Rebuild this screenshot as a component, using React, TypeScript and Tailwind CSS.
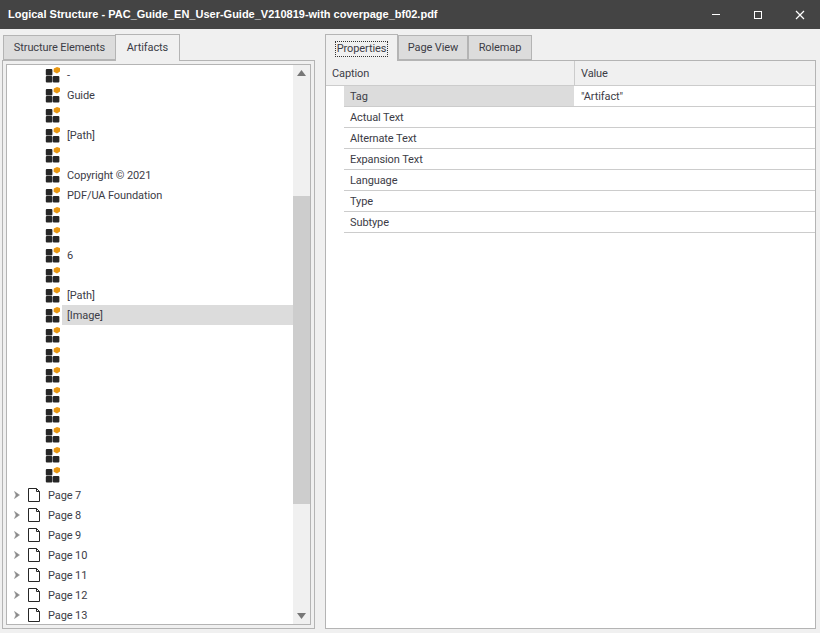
import React from 'react';

const artifactLabels = [
  '-', 'Guide', '', '[Path]', '', 'Copyright © 2021', 'PDF/UA Foundation', '', '', '6', '', '[Path]', '[Image]',
  '', '', '', '', '', '', '', '',
];
const pages = ['Page 7', 'Page 8', 'Page 9', 'Page 10', 'Page 11', 'Page 12', 'Page 13'];
const properties = ['Actual Text', 'Alternate Text', 'Expansion Text', 'Language', 'Type', 'Subtype'];

function ArtifactIcon() {
  return (
    <svg width="16" height="16" viewBox="0 0 16 16" className="shrink-0">
      <rect x="0.8" y="2" width="6.6" height="6.6" rx="1" fill="#262626" />
      <rect x="0.8" y="9" width="6.6" height="6.6" rx="1" fill="#262626" />
      <rect x="7.8" y="9" width="6.6" height="6.6" rx="1" fill="#262626" />
      <path d="M12 0 L15 1 L15 4.4 L12 6.6 L8.6 4.8 L8.8 1.6 Z" fill="#e8960f" />
    </svg>
  );
}

function PageIcon() {
  return (
    <svg width="14" height="16" viewBox="0 0 14 16" className="shrink-0">
      <path d="M0.5 1.5 H8.5 L11.5 4.5 V14.5 H0.5 Z" fill="#fff" stroke="#262626" strokeWidth="1" />
      <path d="M8.5 1.5 V4.5 H11.5" fill="none" stroke="#262626" strokeWidth="1" />
    </svg>
  );
}

function Chevron() {
  return (
    <svg width="6" height="8" viewBox="0 0 6 8" className="shrink-0">
      <path d="M0.5 0.5 L5.5 4 L0.5 7.5 L2 4 Z" fill="#8a8a8a" stroke="#8a8a8a" strokeWidth="0.5" />
    </svg>
  );
}

function Tab({ label, active, focused, className }: { label: string; active?: boolean; focused?: boolean; className: string }) {
  return (
    <div
      className={`flex items-center justify-center pt-px border border-[#b4b4b4] ${
        active ? 'bg-[#f0f0f0] border-b-0 h-[27px] z-10 -mb-px' : 'bg-[#dcdcdc] h-[25px]'
      } ${className}`}
    >
      <span className={focused ? 'outline-1 outline-dotted outline-[#333] px-px leading-[14px]' : ''}>{label}</span>
    </div>
  );
}

export default function App() {
  return (
    <div className="w-[820px] h-[633px] overflow-hidden bg-[#f0f0f0] text-[#3c3c46] text-[11px] tracking-[-0.1px] font-['Roboto',sans-serif] flex flex-col">
      {/* Title bar */}
      <div className="h-[29px] shrink-0 bg-[#444444] flex items-center text-white">
        <div className="flex-1 pl-2 font-bold text-[11px] tracking-normal font-['Liberation_Sans',sans-serif]">
          Logical Structure - PAC_Guide_EN_User-Guide_V210819-with coverpage_bf02.pdf
        </div>
        <div className="flex items-center w-[125px] h-full">
          <div className="w-[42px] flex justify-center">
            <div className="w-2 h-px bg-white" />
          </div>
          <div className="w-[42px] flex justify-center">
            <div className="w-2 h-2 border border-white" />
          </div>
          <div className="w-[41px] flex justify-center">
            <svg width="10" height="10" viewBox="0 0 10 10">
              <path d="M1 1 L9 9 M9 1 L1 9" stroke="#fff" strokeWidth="1.2" />
            </svg>
          </div>
        </div>
      </div>

      <div className="flex pt-[5px] pl-[2px]">
        {/* Left panel */}
        <div className="w-[313px] flex flex-col">
          <div className="flex items-end h-[26px] pl-px">
            <Tab label="Structure Elements" className="w-[113px]" />
            <Tab label="Artifacts" active className="w-[65px] -ml-px" />
          </div>
          <div className="h-[569px] border border-[#b4b4b4] p-[3px]">
            <div className="h-[561px] border border-[#b4b4b4] bg-white flex">
              <div className="flex-1 min-w-0">
                {artifactLabels.map((label, i) => (
                  <div key={i} className="h-5 flex items-center pl-[38px]">
                    <ArtifactIcon />
                    <div className={`ml-[1px] h-5 flex-1 flex items-center pt-[2px] pl-[5px] ${label === '[Image]' ? 'bg-[#dcdcdc]' : ''}`}>
                      {label}
                    </div>
                  </div>
                ))}
                {pages.map((page) => (
                  <div key={page} className="h-5 flex items-center pl-[7px]">
                    <Chevron />
                    <div className="w-[8px]" />
                    <PageIcon />
                    <span className="ml-[6px] pt-[2px]">{page}</span>
                  </div>
                ))}
              </div>
              {/* Scrollbar */}
              <div className="w-[17px] shrink-0 bg-[#f0f0f0] flex flex-col items-center">
                <svg width="9" height="6" viewBox="0 0 9 6" className="mt-[5px]">
                  <path d="M4.5 0 L9 6 H0 Z" fill="#777777" />
                </svg>
                <div className="w-full h-[308px] mt-[120px] bg-[#cdcdcd]" />
                <div className="flex-1" />
                <svg width="9" height="6" viewBox="0 0 9 6" className="mb-[5px]">
                  <path d="M0 0 H9 L4.5 6 Z" fill="#777777" />
                </svg>
              </div>
            </div>
          </div>
        </div>

        {/* Right panel */}
        <div className="w-[491px] ml-[10px] flex flex-col">
          <div className="flex items-end h-[26px]">
            <Tab label="Properties" active focused className="w-[73px]" />
            <Tab label="Page View" className="w-[70px] ml-0" />
            <Tab label="Rolemap" className="w-[64px] ml-0" />
          </div>
          <div className="h-[569px] border border-[#b4b4b4] bg-white">
            <div className="h-[25px] flex bg-[#f0f0f0] border-b border-[#cccccc]">
              <div className="w-[249px] flex items-center pt-[2px] pl-[6px] border-r border-[#cccccc]">Caption</div>
              <div className="flex-1 flex items-center pt-[2px] pl-[6px]">Value</div>
            </div>
            <div className="ml-[18px]">
              <div className="h-[21px] flex border-b border-[#cccccc]">
                <div className="w-[230px] bg-[#dcdcdc] flex items-center pt-[2px] pl-[6px]">Tag</div>
                <div className="flex-1 flex items-center pt-[2px] pl-[7px]">"Artifact"</div>
              </div>
              {properties.map((name) => (
                <div key={name} className="h-[21px] flex items-center pt-[2px] pl-[6px] border-b border-[#cccccc]">
                  {name}
                </div>
              ))}
            </div>
          </div>
        </div>
      </div>
    </div>
  );
}
